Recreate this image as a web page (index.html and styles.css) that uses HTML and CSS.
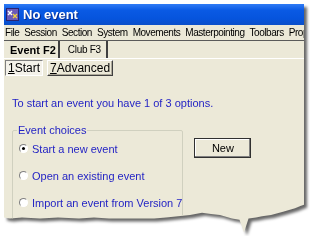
FILE: index.html
```html
<!DOCTYPE html>
<html>

<head>
    <meta charset="utf-8">
    <title>No event</title>
    <link rel="stylesheet" href="styles.css">
</head>

<body>
    <div class="frame">
        <div class="window">
            <div class="titlebar">
                <svg class="appicon" width="13" height="13" viewBox="0 0 13 13">
                    <rect x="0.5" y="0.5" width="12" height="12" fill="#6a5ab8" stroke="#2a2470"/>
                    <path d="M2 3 L6 7 M6 3 L2 7" stroke="#fff" stroke-width="1.4"/>
                    <path d="M7 6 L11 10 M11 6 L7 10" stroke="#f0d040" stroke-width="1.4"/>
                </svg>
                <span class="title">No event</span>
            </div>
            <div class="menubar">
                <span>File</span>
                <span>Session</span>
                <span>Section</span>
                <span>System</span>
                <span>Movements</span>
                <span>Masterpointing</span>
                <span>Toolbars</span>
                <span>Prope</span>
            </div>
            <div class="tabs">
                <div class="tab active">Event F2</div>
                <div class="tab">Club F3</div>
            </div>
            <div class="subtabs">
                <div class="subtab pressed"><u>1</u>Start</div>
                <div class="subtab"><u>7</u>Advanced</div>
            </div>
            <div class="content">
                <p class="intro">To start an event you have 1 of 3 options.</p>
                <div class="row">
                    <fieldset class="choices">
                        <legend>Event choices</legend>
                        <label class="radio"><span class="dot checked"></span>Start a new event</label>
                        <label class="radio"><span class="dot"></span>Open an existing event</label>
                        <label class="radio"><span class="dot"></span>Import an event from Version 7</label>
                    </fieldset>
                    <button class="btn">New</button>
                </div>
            </div>
        </div>
    </div>
</body>

</html>
```

FILE: styles.css
```css
body {
    margin: 0;
    background: #fff;
    font-family: "Liberation Sans", Arial, sans-serif;
    font-size: 11px;
    overflow: hidden;
}

.frame {
    margin: 4px 0 0 4px;
    width: 300px;
    height: 232px;
    filter: drop-shadow(3px 3px 1.5px rgba(0, 0, 0, 0.6));
}

.window {
    height: 100%;
    background: #ece9d8;
    display: flex;
    flex-direction: column;
    clip-path: polygon(0 0, 100% 0, 100% 86.5%, 99% 87%, 97% 88%, 93% 89.5%, 89% 91%, 86% 91.5%, 84% 92%, 81.5% 92.5%, 80% 98.5%, 78.5% 93%, 76% 92.5%, 72% 91%, 69% 90.5%, 66% 90%, 62% 91%, 58% 91.5%, 54% 92%, 50% 92.5%, 45% 92.5%, 40% 92.5%, 35% 92.5%, 30% 92%, 25% 92.5%, 18% 92%, 12% 92.5%, 6% 92%, 2% 92.5%, 0 92%);
}

.titlebar {
    height: 21px;
    flex: none;
    background: linear-gradient(to bottom, #2f7bf5 0%, #0a5ae4 30%, #0654dd 70%, #0b4fc9 100%);
    display: flex;
    align-items: center;
    padding-left: 2px;
    gap: 4px;
}

.title {
    color: #fff;
    font-weight: bold;
    font-size: 13px;
    text-shadow: 1px 1px 0 #0a2a8a;
}

.menubar {
    height: 15px;
    flex: none;
    display: flex;
    align-items: center;
    gap: 5px;
    padding-left: 1px;
    border-bottom: 1px solid #5a5a5a;
    white-space: nowrap;
    overflow: hidden;
    font-size: 10px;
    letter-spacing: -0.45px;
}

.tabs {
    height: 17px;
    flex: none;
    display: flex;
    align-items: stretch;
    border-bottom: 1px solid #fff;
    white-space: nowrap;
}

.tab {
    display: flex;
    align-items: center;
    padding: 0 5px 0 8px;
    border-right: 2px solid #404040;
    font-size: 10px;
    letter-spacing: -0.3px;
}

.tab.active {
    font-weight: bold;
    font-size: 11px;
    letter-spacing: 0;
    padding: 0 2px 0 6px;
}

.subtabs {
    display: flex;
    gap: 4px;
    padding: 1px 0 0 1px;
    white-space: nowrap;
}

.subtab {
    height: 14px;
    padding: 0 2px;
    font-size: 12px;
    line-height: 14px;
    border: 1px solid;
    border-color: #fff #404040 #404040 #fff;
    box-shadow: inset -1px -1px 0 #aca899;
}

.subtab.pressed {
    border-color: #808080 #fff #fff #808080;
    box-shadow: none;
    background: #f4f2ea;
}

.content {
    padding: 21px 0 0 8px;
    color: #2424c4;
}

.intro {
    margin: 0 0 15px 0;
    font-size: 11px;
}

.row {
    display: flex;
    align-items: flex-start;
}

.choices {
    margin: 0;
    width: 161px;
    height: 110px;
    border: 1px solid #d0d0bf;
    border-radius: 2px;
    padding: 2px 0 0 6px;
}

.choices legend {
    padding: 0 1px;
    margin-left: -2px;
    font-size: 11px;
}

.radio {
    display: flex;
    align-items: center;
    gap: 4px;
    height: 27px;
    margin-top: -3px;
    margin-bottom: 3px;
    white-space: nowrap;
}

.dot {
    width: 7px;
    height: 7px;
    border-radius: 50%;
    border: 1px solid;
    border-color: #808080 #fff #fff #808080;
    background: #fff;
    position: relative;
}

.dot.checked::after {
    content: "";
    position: absolute;
    left: 2px;
    top: 2px;
    width: 3px;
    height: 3px;
    border-radius: 50%;
    background: #000;
}

.btn {
    margin: 14px 0 0 11px;
    width: 57px;
    height: 20px;
    background: #ece9d8;
    border: 1px solid #303030;
    box-shadow: inset -1px -1px 0 #808080, inset 1px 1px 0 #fff;
    font-family: "Liberation Sans", Arial, sans-serif;
    font-size: 11px;
    color: #000;
}
```
